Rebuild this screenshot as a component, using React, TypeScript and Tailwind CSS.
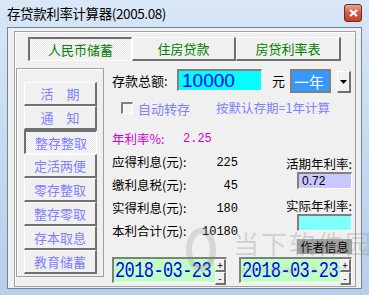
import React from "react";

const raised =
  "border-t border-l border-r-2 border-b-2 border-t-white border-l-white border-r-[#707070] border-b-[#707070]";
const sunkenSel =
  "border-t-2 border-l-2 border-r border-b border-t-[#707070] border-l-[#707070] border-r-white border-b-white bg-[image:repeating-conic-gradient(#ffffff_0_25%,#e6e6e6_0_50%)] bg-[length:2px_2px]";
const field =
  "border-t-2 border-l-2 border-r border-b border-t-[#808080] border-l-[#808080] border-r-white border-b-white";

function Tab({ label, active, w }: { label: string; active?: boolean; w: string }) {
  return (
    <div
      className={`${w} h-[24px] flex items-center justify-center text-[13px] text-[#008000] ${
        active ? sunkenSel : raised
      }`}
    >
      {label}
    </div>
  );
}

function SideBtn({ label, active }: { label: string; active?: boolean }) {
  return (
    <div
      className={`w-[73px] h-[24px] flex items-center justify-center text-[13px] text-[#8080ff] ${
        active ? sunkenSel : raised + " bg-[#f0f0f0]"
      }`}
    >
      {label}
    </div>
  );
}

function DateBox({ w }: { w: string }) {
  return (
    <div className={`${w} h-[26px] flex bg-[#c0ffc0] ${field}`}>
      <div className="flex-1 flex items-center pl-[1px] overflow-hidden">
        <span className="inline-block font-['Liberation_Mono',monospace] text-[17px] leading-none text-[#0000ff] scale-y-[1.35] tracking-[-0.6px]">
          2018-03-23
        </span>
      </div>
      <div className="w-[11px] flex flex-col">
        <div className={`flex-1 bg-[#f0f0f0] flex items-center justify-center text-[10px] leading-none text-black ${raised} border-r border-b`}>
          +
        </div>
        <div className={`flex-1 bg-[#f0f0f0] flex items-center justify-center text-[10px] leading-none text-black ${raised} border-r border-b`}>
          -
        </div>
      </div>
    </div>
  );
}

function ResultRow({ label, value }: { label: string; value: string }) {
  return (
    <div className="h-[23px] flex items-center">
      <span className="text-[12.5px] text-black whitespace-nowrap">{label}</span>
      <span className="ml-auto font-['Liberation_Mono',monospace] text-[12px] text-black">{value}</span>
    </div>
  );
}

export default function App() {
  return (
    <div className="w-[369px] h-[295px] relative overflow-hidden bg-gradient-to-b from-[#d9e7f6] via-[#c6daf0] to-[#b8cfe8] font-['Noto_Sans_CJK_SC',sans-serif] select-none">
      {/* title bar */}
      <div className="h-[27px] flex items-center pl-[7px] pr-[7px]">
        <span className="text-[13.5px] text-black leading-none tracking-[-0.4px]">存贷款利率计算器(2005.08)</span>
        <div className="ml-auto mb-[2px] w-[18px] h-[18px] rounded-[3px] border border-[#6b2a22] bg-gradient-to-b from-[#e8a493] via-[#cf5a42] to-[#c2432b] flex items-center justify-center">
          <svg width="9" height="8" viewBox="0 0 9 8">
            <path d="M1 1 L8 7 M8 1 L1 7" stroke="#ffffff" strokeWidth="2.2" />
          </svg>
        </div>
      </div>

      {/* client area */}
      <div className="mx-[7px] h-[262px] border border-[#70839b] bg-[#f0f0f0] pl-[6px] pt-[3px]">
        {/* group box */}
        <div className="w-[342px] h-[256px] border border-[#a0a0a0] shadow-[inset_1px_1px_0_#ffffff] flex flex-col">
          {/* tabs */}
          <div className="pl-[13px] pt-[5px] flex">
            <Tab label="人民币储蓄" active w="w-[104px]" />
            <Tab label="住房贷款" w="w-[104px]" />
            <Tab label="房贷利率表" w="w-[105px]" />
          </div>

          <div className="flex">
            {/* left panel */}
            <div className="ml-[1px] mt-[7px] w-[88px] h-[209px] border border-[#a0a0a0] shadow-[inset_1px_1px_0_#ffffff] pl-[7px] pt-[13px] flex flex-col">
              <SideBtn label="活　期" />
              <SideBtn label="通　知" />
              <SideBtn label="整存整取" active />
              <SideBtn label="定活两便" />
              <SideBtn label="零存整取" />
              <SideBtn label="整存零取" />
              <SideBtn label="存本取息" />
              <SideBtn label="教育储蓄" />
            </div>

            {/* content */}
            <div className="ml-[8px] mt-[8px] w-[240px] flex flex-col">
              {/* row 1 */}
              <div className="h-[24px] flex items-start">
                <span className="mt-[3px] w-[65px] text-[13px] text-black leading-[18px] whitespace-nowrap">存款总额:</span>
                <div className={`w-[85px] h-[22px] bg-[#00ffff] flex items-center pl-[3px] ${field}`}>
                  <span className="font-['Liberation_Sans',sans-serif] text-[19px] leading-none text-[#0000ff]">10000</span>
                </div>
                <span className="ml-[10px] mt-[4px] text-[13px] text-black leading-[16px]">元</span>
                <div className="ml-[5px] w-[41px] h-[24px] border-2 border-[#808080] bg-[#3399ff] flex items-center pl-[2px]">
                  <span className="text-[15px] text-white leading-none">一年</span>
                </div>
                <div className={`ml-[6px] mt-[2px] w-[14px] h-[22px] bg-[#f0f0f0] flex items-center justify-center ${raised}`}>
                  <svg width="7" height="4" viewBox="0 0 7 4">
                    <path d="M0 0 H7 L3.5 4 Z" fill="#000" />
                  </svg>
                </div>
              </div>

              {/* row 2 */}
              <div className="mt-[8px] h-[14px] flex items-center">
                <div className={`ml-[9px] w-[12px] h-[12px] bg-[#f4f4f4] ${field}`} />
                <span className="ml-[5px] text-[13px] text-[#8080ff] leading-none whitespace-nowrap">自动转存</span>
                <span className="ml-[26px] text-[12.5px] text-[#8080ff] leading-none whitespace-nowrap">按默认存期=1年计算</span>
              </div>

              {/* row 3 */}
              <div className="mt-[17px] h-[14px] flex items-center">
                <span className="w-[71px] text-[12.5px] text-[#d000d0] leading-none whitespace-nowrap">年利率%:</span>
                <span className="font-['Liberation_Mono',monospace] text-[12px] text-[#d000d0] leading-none">2.25</span>
              </div>

              {/* results */}
              <div className="mt-[5px] h-[106px] flex">
                <div className="w-[126px] flex flex-col">
                  <ResultRow label="应得利息(元):" value="225" />
                  <ResultRow label="缴利息税(元):" value="45" />
                  <ResultRow label="实得利息(元):" value="180" />
                  <ResultRow label="本利合计(元):" value="10180" />
                </div>
                <div className="ml-[50px] w-[64px] flex flex-col items-end">
                  <span className="mt-[5px] text-[12.5px] text-black leading-[15px] whitespace-nowrap">活期年利率:</span>
                  <div className={`mt-[1px] w-[55px] h-[17px] bg-[#c8c8ff] flex items-center pl-[3px] ${field}`}>
                    <span className="font-['Liberation_Sans',sans-serif] text-[12px] leading-none text-black">0.72</span>
                  </div>
                  <span className="mt-[9px] text-[12.5px] text-black leading-[15px] whitespace-nowrap">实际年利率:</span>
                  <div className={`mt-[1px] w-[55px] h-[17px] bg-[#80ffff] ${field}`} />
                  <div className="mt-[8px] w-[55px] h-[15px] bg-[#a0a0a0] flex items-center justify-center overflow-hidden">
                    <span className="text-[12px] text-black leading-none whitespace-nowrap">作者信息</span>
                  </div>
                </div>
              </div>

              {/* dates */}
              <div className="flex">
                <DateBox w="w-[115px]" />
                <div className="ml-[12px]">
                  <DateBox w="w-[113px]" />
                </div>
              </div>
            </div>
          </div>
        </div>
      </div>

      {/* watermark overlay */}
      <div className="absolute left-[184px] top-[226px] pointer-events-none">
        <svg width="34" height="48" viewBox="0 0 34 48">
          <ellipse cx="17" cy="24" rx="12" ry="19" fill="none" stroke="rgba(140,140,140,0.25)" strokeWidth="6" />
          <path d="M8 38 Q20 46 30 30" fill="none" stroke="rgba(200,120,80,0.15)" strokeWidth="3" />
        </svg>
      </div>
      <div className="absolute left-[233px] top-[230px] pointer-events-none text-[26px] leading-none text-[rgba(130,130,130,0.28)] tracking-[2px] whitespace-nowrap">
        当下软件园
      </div>
      <div className="absolute left-[240px] top-[264px] pointer-events-none text-[11px] leading-none text-[rgba(130,130,130,0.3)] tracking-[1px] font-['Liberation_Sans',sans-serif] whitespace-nowrap">
        www.downxia.com
      </div>
    </div>
  );
}
